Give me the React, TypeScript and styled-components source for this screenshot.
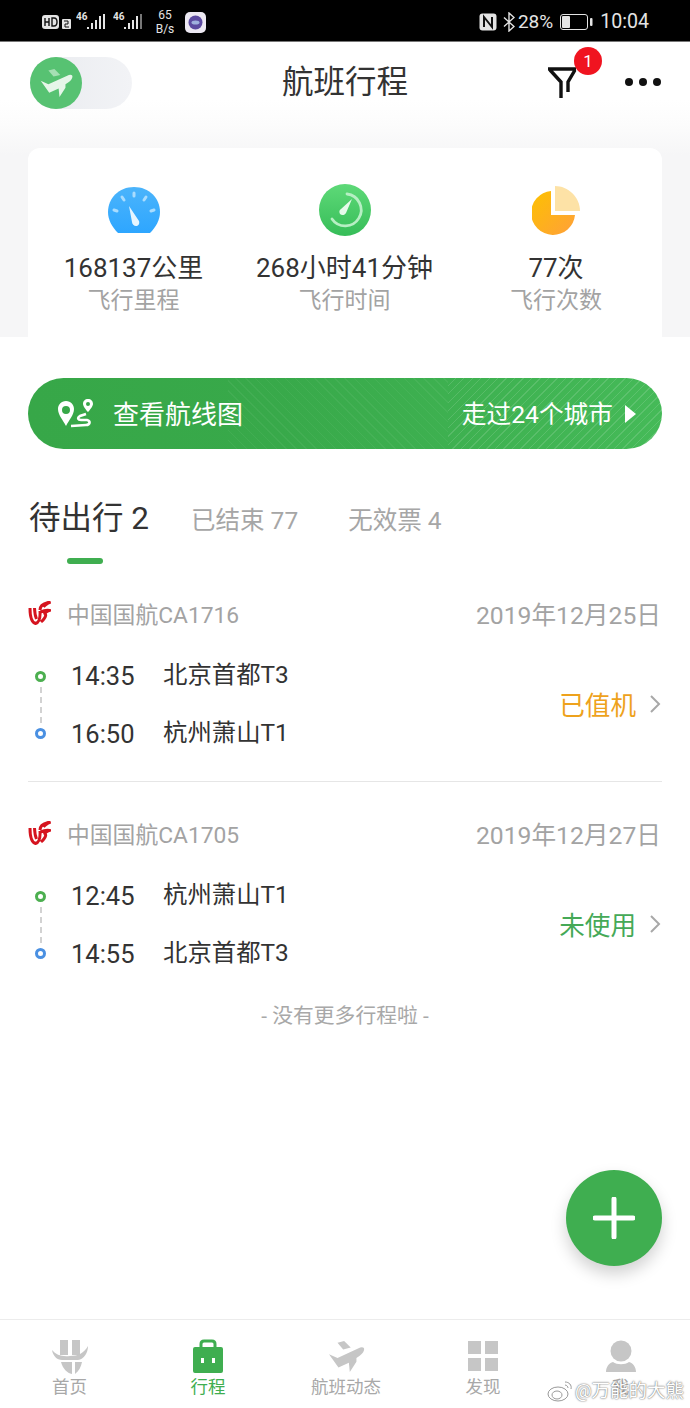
import React from 'react';
import styled, { createGlobalStyle } from 'styled-components';

const GlobalStyle = createGlobalStyle`
    html, body {
        margin: 0;
        padding: 0;
        background: #fff;
        font-family: Roboto, "Noto Sans CJK SC", sans-serif;
    }
    * { box-sizing: border-box; }
`;

const Page = styled.div`
    position: relative;
    width: 690px;
    height: 1408px;
    display: flex;
    flex-direction: column;
    overflow: hidden;
    background: #fff;
`;

const StatusBar = styled.div`
    height: 42px;
    flex: none;
    background: #000;
    color: #e4e4e4;
    display: flex;
    align-items: center;
    justify-content: space-between;
    padding: 3px 41px 0 42px;
    border-bottom: 1px solid #777;
`;

const StatusGroup = styled.div<{ $gap: number }>`
    display: flex;
    align-items: center;
    gap: ${p => p.$gap}px;
`;

const Speed = styled.div`
    font-size: 12px;
    line-height: 14px;
    text-align: center;
    width: 22px;
    margin-left: 4px;
`;

const StatusText = styled.span<{ $size: number }>`
    font-size: ${p => p.$size}px;
    line-height: 22px;
`;

const Header = styled.div`
    height: 83px;
    flex: none;
    display: flex;
    align-items: center;
    justify-content: space-between;
    padding: 0 29px 2px 30px;
    position: relative;
    background: linear-gradient(#fff 70%, #fcfcfc);
`;

const Toggle = styled.div`
    width: 102px;
    height: 52px;
    border-radius: 26px;
    background: linear-gradient(90deg, #e9ebef, #f2f3f6);
    display: flex;
    align-items: center;
`;

const ToggleKnob = styled.div`
    width: 52px;
    height: 52px;
    border-radius: 50%;
    background: #57c272;
    display: flex;
    align-items: center;
    justify-content: center;
`;

const Title = styled.h1`
    margin: 1px 0 0;
    font-size: 31.5px;
    font-weight: 400;
    color: #333;
    line-height: 40px;
    position: absolute;
    left: 0;
    right: 0;
    text-align: center;
    pointer-events: none;
`;

const HeaderActions = styled.div`
    display: flex;
    align-items: center;
    gap: 45px;
`;

const FilterButton = styled.div`
    position: relative;
    width: 32px;
    height: 34px;
`;

const Badge = styled.span`
    position: absolute;
    top: -19px;
    left: 26px;
    width: 28px;
    height: 28px;
    border-radius: 50%;
    background: #f01420;
    color: #fff;
    font-size: 17px;
    line-height: 28px;
    text-align: center;
`;

const MoreDots = styled.div`
    display: flex;
    gap: 6px;
    margin-top: -2px;
`;

const Dot = styled.i`
    width: 8px;
    height: 8px;
    border-radius: 50%;
    background: #111;
`;

const SummaryBand = styled.div`
    height: 212px;
    flex: none;
    padding: 23px 28px 0;
    background: linear-gradient(#fcfcfc, #f6f6f7 30px);
`;

const SummaryCard = styled.div`
    height: 189px;
    background: #fff;
    border-radius: 12px 12px 0 0;
    display: grid;
    grid-template-columns: 211px 211px 212px;
    padding-top: 35px;
`;

const Stat = styled.div`
    display: flex;
    flex-direction: column;
    align-items: center;
`;

const StatIcon = styled.div`
    height: 54px;
    display: flex;
    align-items: center;
    justify-content: center;
`;

const StatValue = styled.div`
    margin-top: 13px;
    font-size: 26px;
    line-height: 36px;
    color: #333;
    white-space: nowrap;
`;

const StatLabel = styled.div`
    margin-top: -1px;
    font-size: 23px;
    line-height: 32px;
    color: #a3a3a3;
`;

const RouteBanner = styled.div`
    flex: none;
    height: 71px;
    margin: 41px 28px 0;
    border-radius: 36px;
    color: #fff;
    display: flex;
    align-items: center;
    padding: 0 26px 0 29px;
    background:
        repeating-linear-gradient(135deg, transparent 0 5px, rgba(255,255,255,.13) 5px 6px) 420px 0 / 214px 100% no-repeat,
        repeating-linear-gradient(45deg, transparent 0 6px, rgba(255,255,255,.05) 6px 7px) 200px 0 / 220px 100% no-repeat,
        linear-gradient(90deg, #37a748 0%, #38a94a 40%, #45ba58 100%);
`;

const BannerTitle = styled.span`
    margin-left: 18px;
    padding-top: 3px;
    font-size: 26px;
    line-height: 34px;
`;

const BannerNote = styled.span`
    margin-left: auto;
    padding-top: 3px;
    font-size: 24.7px;
    line-height: 34px;
`;

const BannerArrow = styled.i`
    margin-left: 12px;
    border-left: 11px solid #fff;
    border-top: 9px solid transparent;
    border-bottom: 9px solid transparent;
`;

const Tabs = styled.div`
    flex: none;
    height: 113px;
    position: relative;
    display: flex;
    align-items: flex-start;
    padding: 48px 0 0 29px;
`;

const Tab = styled.span<{ $active?: boolean; $offset?: number }>`
    font-size: ${p => (p.$active ? 31.5 : 24.5)}px;
    line-height: 44px;
    color: ${p => (p.$active ? '#333' : '#a6a6a6')};
    margin-top: ${p => (p.$active ? 0 : 2)}px;
    margin-left: ${p => p.$offset ?? 0}px;
`;

const TabMark = styled.i`
    position: absolute;
    left: 67px;
    bottom: -2px;
    width: 36px;
    height: 6px;
    border-radius: 3px;
    background: #3fae50;
`;

const FlightItem = styled.div<{ $last?: boolean }>`
    flex: none;
    height: 220px;
    margin: 0 28px;
    padding-top: 34px;
    border-bottom: ${p => (p.$last ? 'none' : '1px solid #e6e6e6')};
`;

const FlightHead = styled.div`
    display: flex;
    align-items: center;
    height: 34px;
    font-size: 22.8px;
    color: #a3a3a3;
`;

const Carrier = styled.span`
    margin-left: 16px;
`;

const FlightDate = styled.span`
    margin-left: auto;
    font-size: 24.7px;
    margin-right: 1px;
`;

const FlightBody = styled.div`
    display: flex;
    align-items: center;
    margin-top: 28px;
`;

const Timeline = styled.div`
    width: 25px;
    height: 68px;
    display: flex;
    flex-direction: column;
    align-items: center;
    justify-content: space-between;
`;

const Stop = styled.i<{ $color: string }>`
    flex: none;
    width: 11px;
    height: 11px;
    border-radius: 50%;
    border: 3px solid ${p => p.$color};
`;

const StopLine = styled.i`
    flex: 1;
    width: 0;
    margin: 5px 0;
    border-left: 2px dashed #d2d2d2;
`;

const Legs = styled.div`
    margin-left: 18px;
    display: grid;
    grid-template-columns: 92px auto;
    row-gap: 22px;
    color: #333;
`;

const LegTime = styled.span`
    font-size: 25.5px;
    line-height: 36px;
`;

const LegPlace = styled.span`
    font-size: 24.4px;
    line-height: 34px;
`;

const FlightState = styled.div<{ $color: string }>`
    margin-left: auto;
    padding-bottom: 3px;
    display: flex;
    align-items: center;
    gap: 13px;
    font-size: 25.6px;
    color: ${p => p.$color};
`;

const EndNote = styled.div`
    flex: none;
    margin-top: -1px;
    text-align: center;
    font-size: 20.8px;
    line-height: 30px;
    color: #a8a8a8;
`;

const Fab = styled.div`
    position: absolute;
    left: 566px;
    top: 1170px;
    width: 96px;
    height: 96px;
    border-radius: 50%;
    background: #3fae50;
    box-shadow: 0 8px 16px rgba(0, 0, 0, .18);
    display: flex;
    align-items: center;
    justify-content: center;
`;

const TabBar = styled.nav`
    margin-top: auto;
    height: 89px;
    flex: none;
    border-top: 1px solid #ececec;
    display: grid;
    grid-template-columns: 139px 138px 138px 136px 139px;
    padding-top: 18px;
`;

const NavItem = styled.div<{ $active?: boolean }>`
    display: flex;
    flex-direction: column;
    align-items: center;
    font-size: 17.5px;
    line-height: 24px;
    color: ${p => (p.$active ? '#3fae50' : '#a8a8a8')};
`;

const NavIcon = styled.div`
    height: 36px;
    margin-bottom: 1px;
    display: flex;
    align-items: center;
    justify-content: center;
`;

const Watermark = styled.div`
    position: absolute;
    left: 547px;
    top: 1379px;
    display: flex;
    align-items: center;
    gap: 1px;
    font-size: 18.5px;
    line-height: 24px;
    color: #fff;
    text-shadow: 0 0 2px #777, 0 0 1px #777;
    white-space: nowrap;
`;

const PlaneIcon = ({ width, height, body, wing }: { width: number; height: number; body: string; wing: string }) => (
    <svg width={width} height={height} viewBox="9 6 41 37">
        <path fill={wing} d="M20 10l7-2 7 7-8 2z" />
        <path fill={body} d="M11 22l9 4 24-11q5-1 4 3-1 4-8 8v4l-7 11-1-10-11 5z" />
    </svg>
);

const AirlineLogo = () => (
    <svg width="23" height="24" viewBox="0 0 23 24">
        <path
            fill="none"
            stroke="#d5141f"
            strokeWidth="3"
            d="M2 7c0 9 2 14.500 5.500 15.500 3.500-1 5-5 4.500-12.500M6.500 7c.2 5 .7 8 2 11M12 9c0-4 4-7 10.500-8-3.500 1.500-6 3-7 5M12.500 11c3.500-1.500 7-2 9-1.500-2 1-4 1.500-6 2.500 3 0 3.500 3.500-2.500 9"
        />
    </svg>
);

const Chevron = () => (
    <svg width="13" height="20" viewBox="0 0 13 20">
        <path d="M2 2l8 8-8 8" fill="none" stroke="#a8a8a8" strokeWidth="2" />
    </svg>
);

interface Flight {
    carrier: string;
    date: string;
    legs: [string, string][];
    state: string;
    stateColor: string;
}

const flights: Flight[] = [
    {
        carrier: '中国国航CA1716',
        date: '2019年12月25日',
        legs: [['14:35', '北京首都T3'], ['16:50', '杭州萧山T1']],
        state: '已值机',
        stateColor: '#eea21c',
    },
    {
        carrier: '中国国航CA1705',
        date: '2019年12月27日',
        legs: [['12:45', '杭州萧山T1'], ['14:55', '北京首都T3']],
        state: '未使用',
        stateColor: '#45a957',
    },
];

const App: React.FC = () => {
    return (
        <Page>
            <GlobalStyle />
            <StatusBar>
                <StatusGroup $gap={5}>
                    <svg width="29" height="16" viewBox="0 0 29 16">
                        <rect x="0" y="1" width="17" height="14" rx="3" fill="#e4e4e4" />
                        <rect x="20" y="5" width="9" height="10" rx="1" fill="#e4e4e4" />
                        <path d="M3 4v8M3 8h4M7 4v8M10 4v8h2q3 0 3-4t-3-4z" fill="none" stroke="#111" strokeWidth="1.400" />
                        <path d="M22 7h4v3h-3v3h4" fill="none" stroke="#111" strokeWidth="1" />
                    </svg>
                    <svg width="32" height="20" viewBox="0 0 32 20">
                        <text x="0" y="8" fontSize="10" fill="#e4e4e4" fontWeight="700">46</text>
                        <path d="M11 17h2v-2h-2zM15 17h2v-6h-2zM19 17h2v-9h-2zM23 17h2V4h-2zM27 17h2V2h-2z" fill="#e4e4e4" />
                    </svg>
                    <svg width="32" height="20" viewBox="0 0 32 20">
                        <text x="0" y="8" fontSize="10" fill="#e4e4e4" fontWeight="700">46</text>
                        <path d="M11 17h2v-2h-2zM15 17h2v-6h-2zM19 17h2v-9h-2zM23 17h2V4h-2z" fill="#e4e4e4" />
                        <path d="M27 17h2V2h-2z" fill="#777" />
                    </svg>
                    <Speed>65<br />B/s</Speed>
                    <svg width="21" height="21" viewBox="0 0 21 21" style={{ marginLeft: 4 }}>
                        <rect width="21" height="21" rx="5" fill="#ece8f2" />
                        <circle cx="10.500" cy="10.500" r="7" fill="#5c4aa0" />
                        <ellipse cx="10.500" cy="10.500" rx="4" ry="2" fill="#9fb0de" />
                    </svg>
                </StatusGroup>
                <StatusGroup $gap={3}>
                    <svg width="18" height="18" viewBox="0 0 18 18">
                        <rect x="0.500" y="0.500" width="17" height="17" rx="3" fill="#e4e4e4" />
                        <path d="M5 14V4l8 10V4" fill="none" stroke="#111" strokeWidth="2" />
                    </svg>
                    <svg width="12" height="20" viewBox="0 0 12 20" style={{ marginLeft: 3 }}>
                        <path d="M1 5.500l10 9-5 4.500V1l5 4.500-10 9" fill="none" stroke="#e4e4e4" strokeWidth="1.400" />
                    </svg>
                    <StatusText $size={19}>28%</StatusText>
                    <svg width="33" height="18" viewBox="0 0 33 18" style={{ marginLeft: 4 }}>
                        <rect x="0.500" y="1.500" width="27" height="15" rx="2.500" fill="none" stroke="#e4e4e4" />
                        <rect x="2" y="3" width="8" height="12" rx="1" fill="#e4e4e4" />
                        <rect x="30" y="5" width="2.500" height="8" rx="1" fill="#e4e4e4" />
                    </svg>
                    <StatusText $size={19.6} style={{ marginLeft: 4 }}>10:04</StatusText>
                </StatusGroup>
            </StatusBar>

            <Header>
                <Toggle>
                    <ToggleKnob>
                        <PlaneIcon width={35} height={32} body="#e6f6e9" wing="#a6dfb4" />
                    </ToggleKnob>
                </Toggle>
                <Title>航班行程</Title>
                <HeaderActions>
                    <FilterButton>
                        <svg width="32" height="34" viewBox="0 0 32 34">
                            <path d="M0 3h28M2 4l11 12v16M27 4L20 16v10" fill="none" stroke="#111" strokeWidth="3.400" />
                        </svg>
                        <Badge>1</Badge>
                    </FilterButton>
                    <MoreDots>
                        <Dot /><Dot /><Dot />
                    </MoreDots>
                </HeaderActions>
            </Header>

            <SummaryBand>
                <SummaryCard>
                    <Stat>
                        <StatIcon>
                            <svg width="54" height="50" viewBox="0 0 54 50">
                                <defs>
                                    <linearGradient id="gauge" x1="0" y1="0" x2="0" y2="1">
                                        <stop offset="0" stopColor="#4bb4fb" />
                                        <stop offset="1" stopColor="#2ea6ff" />
                                    </linearGradient>
                                </defs>
                                <path fill="url(#gauge)" d="M11 48C5 42 1 35 1 27 1 13 12 2 27 2s26 11 26 25c0 8-4 15-10 21z" />
                                <g stroke="#a9dcfe" strokeWidth="3" strokeLinecap="round">
                                    <path d="M27 8v3M15 12l2 3M39 12l-2 3M7 25l3 1M47 25l-3 1" />
                                </g>
                                <path fill="#e6f5ff" d="M22 21l10 15c1 3-1 5-3 5s-4-2-4-4z" />
                            </svg>
                        </StatIcon>
                        <StatValue>168137公里</StatValue>
                        <StatLabel>飞行里程</StatLabel>
                    </Stat>
                    <Stat>
                        <StatIcon>
                            <svg width="52" height="52" viewBox="0 0 52 52">
                                <defs>
                                    <linearGradient id="clock" x1="0" y1="0" x2="0" y2="1">
                                        <stop offset="0" stopColor="#5ed978" />
                                        <stop offset="1" stopColor="#36bd58" />
                                    </linearGradient>
                                </defs>
                                <circle cx="26" cy="26" r="26" fill="url(#clock)" />
                                <path d="M28 10a16 16 0 1 1-15 25" fill="none" stroke="#b6efc3" strokeWidth="2.800" strokeLinecap="round" />
                                <path fill="#e6faea" d="M33 15l-6 14c-1 2-4 3-6 1-1-2-1-4 1-5z" />
                            </svg>
                        </StatIcon>
                        <StatValue>268小时41分钟</StatValue>
                        <StatLabel>飞行时间</StatLabel>
                    </Stat>
                    <Stat>
                        <StatIcon>
                            <svg width="48" height="50" viewBox="2 0 48 50">
                                <defs>
                                    <linearGradient id="pie" x1="0" y1="0" x2="1" y2="1">
                                        <stop offset="0" stopColor="#fdc100" />
                                        <stop offset="1" stopColor="#ffa03a" />
                                    </linearGradient>
                                </defs>
                                <path fill="url(#pie)" d="M21 6a22 22 0 1 0 24 24H21z" />
                                <path fill="#fde2a6" d="M25 1c13 0 25 11 25 25H25z" />
                            </svg>
                        </StatIcon>
                        <StatValue>77次</StatValue>
                        <StatLabel>飞行次数</StatLabel>
                    </Stat>
                </SummaryCard>
            </SummaryBand>

            <RouteBanner>
                <svg width="38" height="40" viewBox="0 0 38 40">
                    <path fill="#fff" fillRule="evenodd" d="M9 7C4 7 1 11 1 15c0 6 5 11 8 17 3-6 8-11 8-17 0-4-3-8-8-8zm0 5a4 4 0 1 1 0 8 4 4 0 0 1 0-8z" />
                    <path fill="#fff" fillRule="evenodd" d="M31 5c-3 0-5 2-5 5 0 2 3 6 5 8 2-2 5-6 5-8 0-3-2-5-5-5zm0 3a2 2 0 1 1 0 4 2 2 0 0 1 0-4z" />
                    <path fill="none" stroke="#fff" strokeWidth="2.600" d="M29 20l-6 2c-3 2-2 4 1 4h6c4 1 3 5-1 5l-15 1" />
                </svg>
                <BannerTitle>查看航线图</BannerTitle>
                <BannerNote>走过24个城市</BannerNote>
                <BannerArrow />
            </RouteBanner>

            <Tabs>
                <Tab $active>待出行 2</Tab>
                <Tab $offset={42}>已结束 77</Tab>
                <Tab $offset={50}>无效票 4</Tab>
                <TabMark />
            </Tabs>

            {flights.map((flight, index) => (
                <FlightItem key={flight.carrier} $last={index === flights.length - 1}>
                    <FlightHead>
                        <AirlineLogo />
                        <Carrier>{flight.carrier}</Carrier>
                        <FlightDate>{flight.date}</FlightDate>
                    </FlightHead>
                    <FlightBody>
                        <Timeline>
                            <Stop $color="#4caf50" />
                            <StopLine />
                            <Stop $color="#4a90e2" />
                        </Timeline>
                        <Legs>
                            {flight.legs.map(([time, place]) => (
                                <React.Fragment key={time}>
                                    <LegTime>{time}</LegTime>
                                    <LegPlace>{place}</LegPlace>
                                </React.Fragment>
                            ))}
                        </Legs>
                        <FlightState $color={flight.stateColor}>
                            {flight.state}
                            <Chevron />
                        </FlightState>
                    </FlightBody>
                </FlightItem>
            ))}

            <EndNote>- 没有更多行程啦 -</EndNote>

            <Fab>
                <svg width="42" height="42" viewBox="0 0 42 42">
                    <path d="M21 2v38M2 21h38" stroke="#fff" strokeWidth="5" strokeLinecap="round" />
                </svg>
            </Fab>

            <TabBar>
                <NavItem>
                    <NavIcon>
                        <svg width="38" height="36" viewBox="9 7 38 36">
                            <path fill="#c6c6c6" d="M18 9h8v15h-8zM30 9h8v15h-8z" />
                            <path fill="#c6c6c6" d="M10 19c4 5 10 7 18 6 8 0 14-3 18-10 0 7-4 13-10 14H20c-5 0-9-4-10-10z" />
                            <path fill="#c6c6c6" d="M19 31h11v12c-5-1-9-5-11-12zM33 31h7c-1 5-3 9-7 12z" />
                        </svg>
                    </NavIcon>
                    首页
                </NavItem>
                <NavItem $active>
                    <NavIcon>
                        <svg width="30" height="34" viewBox="0 0 30 34">
                            <path fill="#3fae50" fillRule="evenodd" d="M2 8h26a2 2 0 0 1 2 2v22a2 2 0 0 1-2 2H2a2 2 0 0 1-2-2V10a2 2 0 0 1 2-2zm6 11v5h3v-5zm11 0v5h3v-5z" />
                            <path fill="none" stroke="#3fae50" strokeWidth="3" d="M8 8V5q0-3 3-3h8q3 0 3 3v3" />
                        </svg>
                    </NavIcon>
                    行程
                </NavItem>
                <NavItem>
                    <NavIcon>
                        <PlaneIcon width={39} height={35} body="#c6c6c6" wing="#c6c6c6" />
                    </NavIcon>
                    航班动态
                </NavItem>
                <NavItem>
                    <NavIcon>
                        <svg width="30" height="30" viewBox="0 0 30 30">
                            <path fill="#c6c6c6" d="M0 0h13v13H0zM17 0h13v13H17zM0 17h13v13H0zM17 17h13v13H17z" />
                        </svg>
                    </NavIcon>
                    发现
                </NavItem>
                <NavItem>
                    <NavIcon>
                        <svg width="30" height="32" viewBox="0 0 30 32">
                            <circle cx="15" cy="11" r="10.500" fill="#c6c6c6" />
                            <path fill="#c6c6c6" d="M0 32c0-5 3-9 7-10 4 3 12 3 16 0 4 1 7 5 7 10z" />
                        </svg>
                    </NavIcon>
                    我
                </NavItem>
            </TabBar>

            <Watermark>
                <svg width="27" height="22" viewBox="0 0 27 22">
                    <ellipse cx="11" cy="14" rx="10" ry="7" fill="#fff" stroke="#999" />
                    <ellipse cx="10" cy="15" rx="5" ry="4" fill="none" stroke="#999" />
                    <path d="M18 2c4 0 7 3 6 7M18 5c2 0 3 2 3 3" fill="none" stroke="#999" />
                </svg>
                @万能的大熊
            </Watermark>
        </Page>
    );
};

export default App;
